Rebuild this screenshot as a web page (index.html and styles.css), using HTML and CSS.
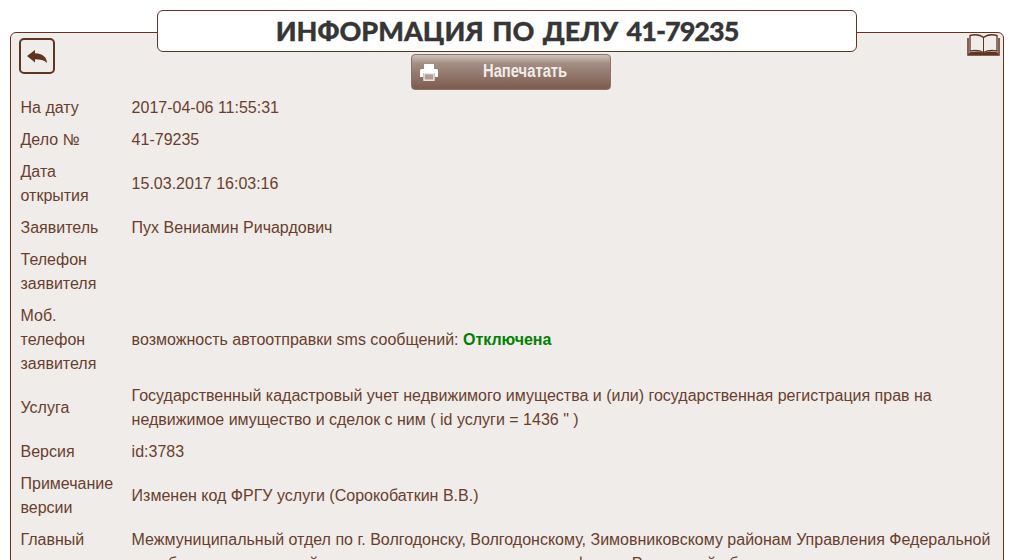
FILE: index.html
```html
<!DOCTYPE html>
<html>
    <head>
        <meta charset="utf-8">
        <title>Информация по делу</title>
        <link rel="stylesheet" href="styles.css">
    </head>
    <body>
        <div class="caseTitle">ИНФОРМАЦИЯ ПО ДЕЛУ <span class="caseNumber">41-79235</span></div>
        <div class="casePanel">
            <div class="caseTools">
                <a class="backButton">
                    <svg width="20" height="13" viewBox="0 0 20 13"><path d="M0 6 8 0V3.200C15 3.200 20 7 20 13 17 10 13 9.300 8 9.300V12.500Z" fill="#5f3423"/></svg>
                </a>
                <a class="printButton">
                    <svg class="printIcon" width="18" height="17" viewBox="0 0 18 17">
                        <path d="M4 0H14V6H4Z" fill="#fff"/>
                        <path d="M1.500 5H16.500Q18 5 18 6.500V13H15V9H3V13H0V6.500Q0 5 1.500 5Z" fill="#fff"/>
                        <path d="M4 9.500H14V16.300H4Z" fill="#fff" fill-opacity="0.300" stroke="#fff" stroke-opacity="0.800" stroke-width="1.400"/>
                    </svg>
                    <span>Напечатать</span>
                </a>
                <svg class="bookIcon" width="33" height="22" viewBox="0 0 33 22">
                    <path d="M16.500 3.500C13 0.500 7 0.500 3 1.500V17C8 16 13 16.500 16.500 18.500 20 16.500 25 16 30 17V1.500C26 0.500 20 0.500 16.500 3.500Z" fill="none" stroke="#5f3423" stroke-width="1.300"/>
                    <path d="M16.500 3.500V18" stroke="#5f3423" stroke-width="1"/>
                    <path d="M1 4V21H32V4" fill="none" stroke="#5f3423" stroke-width="1.500"/>
                    <path d="M2 21V18.500C8 17 13 17.500 16.500 19 20 17.500 25 17 31 18.500V21Z" fill="#5f3423"/>
                </svg>
            </div>
            <table class="caseTable">
                <tr><td>На дату</td><td>2017-04-06 11:55:31</td></tr>
                <tr><td>Дело №</td><td>41-79235</td></tr>
                <tr><td>Дата открытия</td><td>15.03.2017 16:03:16</td></tr>
                <tr><td>Заявитель</td><td>Пух Вениамин Ричардович</td></tr>
                <tr><td>Телефон заявителя</td><td></td></tr>
                <tr><td>Моб. телефон заявителя</td><td>возможность автоотправки sms сообщений: <b class="smsOff">Отключена</b></td></tr>
                <tr><td>Услуга</td><td>Государственный кадастровый учет недвижимого имущества и (или) государственная регистрация прав на недвижимое имущество и сделок с ним ( id услуги = 1436 " )</td></tr>
                <tr><td>Версия</td><td>id:3783</td></tr>
                <tr><td>Примечание версии</td><td>Изменен код ФРГУ услуги (Сорокобаткин В.В.)</td></tr>
                <tr class="topRow"><td>Главный</td><td>Межмуниципальный отдел по г. Волгодонску, Волгодонскому, Зимовниковскому районам Управления Федеральной службы государственной регистрации, кадастра и картографии по Ростовской области</td></tr>
            </table>
        </div>
    </body>
</html>
```

FILE: styles.css
```css
html, body {
  height: 560px;
  overflow: hidden;
}
body {
  margin: 0;
  padding: 10px 24px 0 10px;
  font-family: "Liberation Sans", sans-serif;
  font-size: 16px;
  line-height: 24px;
  color: #683f2e;
  background: #ffffff;
}
.caseTitle {
  position: relative;
  z-index: 2;
  width: 700px;
  height: 42px;
  box-sizing: border-box;
  margin: 0 auto -20px;
  border: 1px solid #5f3423;
  border-radius: 6px;
  background: #ffffff;
  color: #363636;
  font-family: Lato, "Open Sans", sans-serif;
  font-size: 27px;
  font-weight: 900;
  line-height: 40px;
  word-spacing: 2px;
  text-align: center;
  -webkit-text-stroke: 0.3px #363636;
}
.caseNumber {
  letter-spacing: -1px;
}
.casePanel {
  border: 1px solid #5f3423;
  border-radius: 6px;
  background: #f0ece9;
  min-height: 700px;
}
.caseTools {
  display: flex;
  justify-content: space-between;
  align-items: flex-start;
  height: 59px;
  padding: 0 3px 0 8px;
}
.backButton {
  display: flex;
  align-items: center;
  justify-content: center;
  width: 36px;
  height: 36px;
  box-sizing: border-box;
  margin-top: 5px;
  border: 2px solid #5f3423;
  border-radius: 5px;
}
.printButton {
  display: flex;
  align-items: center;
  width: 200px;
  height: 36px;
  box-sizing: border-box;
  margin-top: 21px;
  padding-left: 8px;
  border: 1px solid #8d7266;
  border-radius: 4px;
  background: linear-gradient(to bottom, #cdc2bb 0%, #a38d83 25%, #7c5c4f 100%);
  color: #f2ecea;
  font-size: 18px;
  font-weight: bold;
}
.printButton span {
  margin: -2px 0 0 45px;
  transform: scaleX(0.82);
  transform-origin: left center;
}
.bookIcon {
  margin-top: 1px;
}
.caseTable {
  width: 100%;
  border-collapse: collapse;
}
.caseTable td {
  padding: 4px 9px;
  vertical-align: middle;
}
.caseTable td:first-child {
  width: 1%;
  padding-left: 9.500px;
  padding-right: 9.500px;
}
.caseTable .topRow td {
  vertical-align: top;
}
.smsOff {
  color: #008000;
}
```
